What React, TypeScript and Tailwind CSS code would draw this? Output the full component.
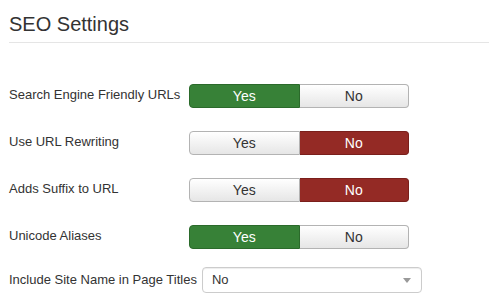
import React from 'react';

type Toggle = { label: string; value: boolean };

const rows: Toggle[] = [
  { label: 'Search Engine Friendly URLs', value: true },
  { label: 'Use URL Rewriting', value: false },
  { label: 'Adds Suffix to URL', value: false },
  { label: 'Unicode Aliases', value: true },
];

const YesNo: React.FC<{ value: boolean }> = ({ value }) => {
  const off =
    'bg-gradient-to-b from-white to-[#e6e6e6] text-[#333] border-[#b3b3b3] shadow-[inset_0_1px_0_rgba(255,255,255,0.2)]';
  return (
    <div className="flex h-[24px] w-[220px] text-[14px] leading-none">
      <div
        className={`flex-1 flex items-center justify-center rounded-l-[4px] border ${
          value ? 'bg-[#378137] border-[#2b6a2b] text-white' : off
        }`}
      >
        Yes
      </div>
      <div
        className={`flex-1 flex items-center justify-center rounded-r-[4px] border border-l-0 ${
          value ? off : 'bg-[#942a25] border-[#7a1f1b] text-white'
        }`}
      >
        No
      </div>
    </div>
  );
}

export default function App() {
  return (
    <div className="w-[489px] h-[305px] bg-white font-['Liberation_Sans',Arial,sans-serif] text-[#333] pl-[9px]">
      <h2 className="pt-[12px] text-[20px] leading-[24px] text-[#333]">SEO Settings</h2>
      <div className="mt-[6px] h-px bg-[#e5e5e5]" />

      <div className="pt-[41px] flex flex-col gap-[23px]">
        {rows.map((row) => (
          <div key={row.label} className="flex items-center">
            <label className="w-[180px] text-[13px] leading-[18px] -mt-[2px]">{row.label}</label>
            <YesNo value={row.value} />
          </div>
        ))}
      </div>

      <div className="mt-[18px] flex items-center gap-[5px]">
        <label className="text-[13px] leading-[18px]">Include Site Name in Page Titles</label>
        <div className="relative flex items-center h-[26px] w-[220px] border border-[#ccc] rounded-[4px] bg-white shadow-[inset_0_1px_1px_rgba(0,0,0,0.075)] pl-[9px] text-[13px]">
          No
          <span className="absolute right-[10px] top-[10px] w-0 h-0 border-l-[4px] border-r-[4px] border-t-[5px] border-l-transparent border-r-transparent border-t-[#999]" />
        </div>
      </div>
    </div>
  );
}
